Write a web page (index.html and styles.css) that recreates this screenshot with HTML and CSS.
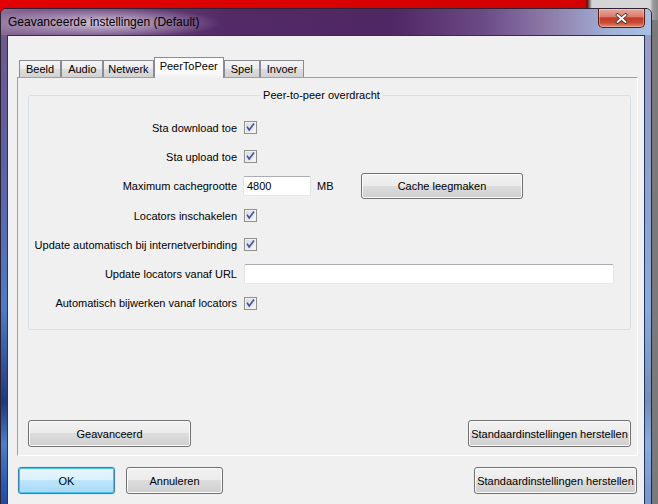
FILE: index.html
```html
<!DOCTYPE html>
<html lang="nl">
<head>
  <meta charset="utf-8">
  <title>Geavanceerde instellingen (Default)</title>
  <link rel="stylesheet" href="styles.css">
</head>
<body>
  <div class="desk">
    <div class="backwin"></div>
    <div class="window">
      <div class="titlebar">
        <span class="title">Geavanceerde instellingen (Default)</span>
        <button class="close" type="button">
          <svg width="13" height="11" viewBox="0 0 13 11">
            <path d="M2.5 2 L10.5 9 M10.5 2 L2.5 9" stroke="#3a2a2a" stroke-width="3.6" stroke-linecap="round"/>
            <path d="M2.5 2 L10.5 9 M10.5 2 L2.5 9" stroke="#fff" stroke-width="2" stroke-linecap="round"/>
          </svg>
        </button>
      </div>
      <div class="client">
        <div class="tabs">
          <div class="tab">Beeld</div>
          <div class="tab">Audio</div>
          <div class="tab narrow">Netwerk</div>
          <div class="tab active">PeerToPeer</div>
          <div class="tab">Spel</div>
          <div class="tab">Invoer</div>
        </div>
        <div class="pane">
          <fieldset class="group">
            <legend>Peer-to-peer overdracht</legend>
            <div class="form">
              <label class="lbl">Sta download toe</label>
              <span class="check"><svg width="11" height="11" viewBox="0 0 11 11"><path d="M2 4.6 L4.2 8 L9 1.6" fill="none" stroke="#44559a" stroke-width="1.7"/></svg></span>

              <label class="lbl">Sta upload toe</label>
              <span class="check"><svg width="11" height="11" viewBox="0 0 11 11"><path d="M2 4.6 L4.2 8 L9 1.6" fill="none" stroke="#44559a" stroke-width="1.7"/></svg></span>

              <label class="lbl">Maximum cachegrootte</label>
              <div class="cache-row">
                <input class="field small" type="text" value="4800">
                <span class="unit">MB</span>
                <button class="btn cache" type="button">Cache leegmaken</button>
              </div>

              <label class="lbl">Locators inschakelen</label>
              <span class="check"><svg width="11" height="11" viewBox="0 0 11 11"><path d="M2 4.6 L4.2 8 L9 1.6" fill="none" stroke="#44559a" stroke-width="1.7"/></svg></span>

              <label class="lbl">Update automatisch bij internetverbinding</label>
              <span class="check"><svg width="11" height="11" viewBox="0 0 11 11"><path d="M2 4.6 L4.2 8 L9 1.6" fill="none" stroke="#44559a" stroke-width="1.7"/></svg></span>

              <label class="lbl">Update locators vanaf URL</label>
              <input class="field url" type="text" value="">

              <label class="lbl">Automatisch bijwerken vanaf locators</label>
              <span class="check"><svg width="11" height="11" viewBox="0 0 11 11"><path d="M2 4.6 L4.2 8 L9 1.6" fill="none" stroke="#44559a" stroke-width="1.7"/></svg></span>
            </div>
          </fieldset>
          <div class="pane-buttons">
            <button class="btn wide" type="button">Geavanceerd</button>
            <button class="btn wide" type="button">Standaardinstellingen herstellen</button>
          </div>
        </div>
        <div class="dialog-buttons">
          <button class="btn default" type="button">OK</button>
          <button class="btn" type="button">Annuleren</button>
          <button class="btn wide push" type="button">Standaardinstellingen herstellen</button>
        </div>
      </div>
    </div>
  </div>
</body>
</html>
```

FILE: styles.css
```css
* {
  box-sizing: border-box;
}

html, body {
  margin: 0;
  width: 658px;
  height: 504px;
  overflow: hidden;
}

body {
  font: 11px "Liberation Sans", Arial, sans-serif;
  color: #000;
  background: #7a7a7a;
}

.desk {
  position: relative;
  width: 658px;
  height: 504px;
}

/* red window behind the dialog */
.backwin {
  position: absolute;
  left: 0;
  top: 0;
  width: 658px;
  height: 20px;
  background: linear-gradient(to right, #e20000 0, #d40000 586px, #4a1010 587px, #8a8a8a 590px, #d4d4d4 592px, #d8d8d8 650px, #9a9a9a 653px, #8a8a8a 100%);
}

.window {
  position: absolute;
  left: 0;
  top: 8px;
  width: 652px;
  height: 520px;
  border: 1px solid #2a2434;
  border-radius: 6px 6px 0 0;
  overflow: hidden;
  display: flex;
  flex-direction: column;
  background:
    linear-gradient(to right, rgba(0,0,0,0) 643px, rgba(190,210,240,.55) 644px),
    linear-gradient(to bottom, #72568a 0%, #5d62a2 30%, #4c7cc6 58%, #20387c 76%, #4c7ec8 84%, #2a58b0 92%, #1a3a90 100%);
}

.titlebar {
  height: 26px;
  flex: none;
  display: flex;
  align-items: center;
  padding-left: 7px;
  background:
    radial-gradient(ellipse 120px 16px at 100px 14px, rgba(238,228,242,.8), rgba(238,228,242,0) 100%),
    linear-gradient(to right, #8a6c96 0%, #6d4a80 10%, #532a66 35%, #4f2762 60%, #6a4a85 74%, #8d7aa8 84%, #a2b2d8 94%, #a8c0e4 100%);
}

.title {
  font: 12px "Liberation Sans", Arial, sans-serif;
  color: #000;
}

.close {
  margin-left: auto;
  margin-right: 6px;
  align-self: flex-start;
  width: 47px;
  height: 19px;
  padding: 0;
  border: 1px solid #5c1a12;
  border-top: none;
  border-radius: 0 0 5px 5px;
  background: linear-gradient(#e9a89a 0%, #d97d6c 42%, #c23a26 50%, #c84a32 75%, #e08a6a 100%);
  box-shadow: inset 0 0 0 1px rgba(255,255,255,.3);
  display: flex;
  align-items: center;
  justify-content: center;
}

.client {
  flex: 1;
  margin: 0 6px;
  border: 1px solid #1f3560;
  background: #f0f0f0;
  padding: 21px 6px 0 9px;
}

.tabs {
  display: flex;
  align-items: flex-end;
  height: 20px;
  padding-left: 2px;
}

.tab {
  height: 17px;
  line-height: 16px;
  padding: 0 6px;
  border: 1px solid #898c95;
  border-bottom: none;
  background: linear-gradient(#f4f4f4 0%, #ebebeb 50%, #dddddd 50%, #d2d2d2 100%);
}

.tab.narrow {
  padding: 0 4px;
}

.tab.active {
  position: relative;
  z-index: 1;
  height: 21px;
  line-height: 17px;
  margin-bottom: -1px;
  padding: 0 5px;
  background: linear-gradient(#ffffff 0%, #fbfbfb 70%, #f0f0f0 100%);
}

.pane {
  height: 379px;
  display: flex;
  flex-direction: column;
  border: 1px solid #a0a0a0;
  border-right-color: #fff;
  border-bottom-color: #fff;
}

.group {
  margin: 10px 6px 0 10px;
  padding: 11px 16px 11px 0;
  min-width: 0;
  border: 1px solid #d5dfe5;
  border-radius: 3px;
}

.group legend {
  margin: 0 auto;
  padding: 0 3px;
  line-height: 14px;
}

.form {
  display: grid;
  grid-template-columns: 208px 1fr;
  grid-auto-rows: 29.3px;
  column-gap: 7px;
  align-items: center;
}

.lbl {
  text-align: right;
  white-space: nowrap;
}

.check {
  width: 13px;
  height: 13px;
  border: 1px solid #8f8f8f;
  background: linear-gradient(135deg, #d6d8dc 0%, #f6f6f6 100%);
  box-shadow: inset 0 0 0 1px #f2f2f2;
  display: flex;
  align-items: center;
  justify-content: center;
}

.field {
  height: 20px;
  padding: 0 3px;
  font: 11px "Liberation Sans", Arial, sans-serif;
  color: #000;
  background: #fff;
  border: 1px solid;
  border-color: #abadb3 #e2e3ea #e3e9ef #e2e3ea;
  border-radius: 2px;
}

.field.url {
  width: 100%;
}

.cache-row {
  display: flex;
  align-items: center;
  margin-left: -1px;
}

.field.small {
  width: 68px;
}

.unit {
  width: 50px;
  padding-left: 6px;
}

.btn {
  height: 27px;
  width: 97px;
  padding: 0;
  font: 11px "Liberation Sans", Arial, sans-serif;
  color: #000;
  border: 1px solid #707070;
  border-radius: 3px;
  background: linear-gradient(#f2f2f2 0%, #ebebeb 50%, #dddddd 50%, #cfcfcf 100%);
  box-shadow: inset 0 0 0 1px #fcfcfc;
}

.btn.cache {
  width: 162px;
  height: 26px;
}

.btn.wide {
  width: 163px;
}

.btn.default {
  border-color: #3c7fb1;
  background: linear-gradient(#eaf6fd 0%, #d9f0fc 50%, #bee6fd 50%, #a7d9f5 100%);
  box-shadow: inset 0 0 0 1px #48c2f0, 0 0 1px #48c2f0;
}

.pane-buttons {
  margin-top: auto;
  display: flex;
  justify-content: space-between;
  padding: 0 6px 8px 10px;
}

.dialog-buttons {
  display: flex;
  gap: 11px;
  margin-top: 11px;
  padding: 0 1px;
}

.dialog-buttons .push {
  margin-left: auto;
}
```
